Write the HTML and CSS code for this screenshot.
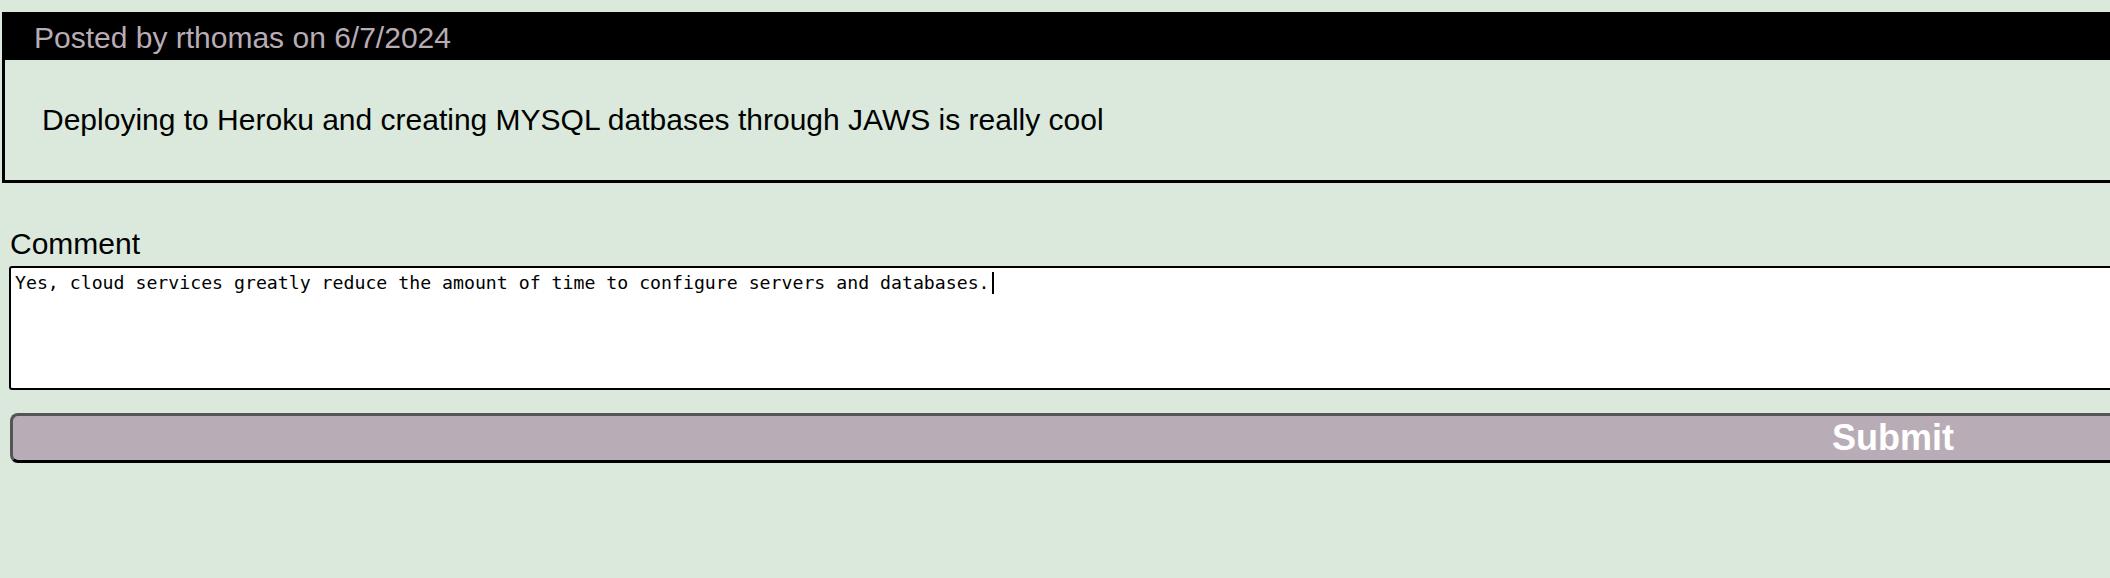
FILE: index.html
```html
<!DOCTYPE html>
<html lang="en">
<head>
<meta charset="utf-8">
<title>Post</title>
<link rel="stylesheet" href="styles.css">
</head>
<body>
  <main class="page">
    <article class="post">
      <header class="post-header">Posted by rthomas on 6/7/2024</header>
      <div class="post-body">Deploying to Heroku and creating MYSQL datbases through JAWS is really cool</div>
    </article>

    <form class="comment-form">
      <label class="comment-label" for="comment">Comment</label>
      <div class="comment-box" id="comment" role="textbox" aria-multiline="true">Yes, cloud services greatly reduce the amount of time to configure servers and databases.<span class="caret"></span></div>
      <button type="button" class="submit-btn">Submit</button>
    </form>
  </main>
</body>
</html>
```

FILE: styles.css
```css
html, body {
  margin: 0;
  padding: 0;
  overflow: hidden;
  background: #dae9dc;
}

.page {
  padding-top: 12px;
  font-family: "Liberation Sans", Arial, sans-serif;
  color: #000;
}

.post {
  margin-left: 2px;
  width: 3800px;
  border: 3px solid #000;
}

.post-header {
  background: #000;
  color: #b8adb6;
  font-size: 30px;
  line-height: 35px;
  padding: 5px 29px;
}

.post-body {
  font-size: 30px;
  line-height: 35px;
  padding: 42px 37px 43px;
}

.comment-form {
  display: flex;
  flex-direction: column;
  align-items: flex-start;
  padding-left: 9px;
  margin-top: 43px;
}

.comment-label {
  font-size: 30px;
  line-height: 35px;
  padding-left: 1px;
  margin-bottom: 5px;
}

.comment-box {
  box-sizing: border-box;
  width: 3768px;
  height: 124px;
  background: #fff;
  border: 2px solid #000;
  border-radius: 3px;
  padding: 4px 4px;
  font-family: "DejaVu Sans Mono", "Liberation Mono", monospace;
  font-size: 18.2px;
  line-height: 21px;
  color: #000;
  white-space: pre-wrap;
}

.caret {
  display: inline-block;
  width: 2px;
  height: 22px;
  background: #000;
  vertical-align: -5px;
  margin-left: 2px;
}

.submit-btn {
  box-sizing: border-box;
  margin-top: 23px;
  margin-left: 1px;
  width: 3766px;
  height: 50px;
  padding: 2px 0 2px;
  background: #b8adb6;
  border: 3px solid;
  border-color: #555 #000 #000 #555;
  border-radius: 8px;
  color: #fff;
  font-family: "Liberation Sans", Arial, sans-serif;
  font-weight: bold;
  font-size: 36px;
  line-height: 40px;
  text-align: center;
}
```
